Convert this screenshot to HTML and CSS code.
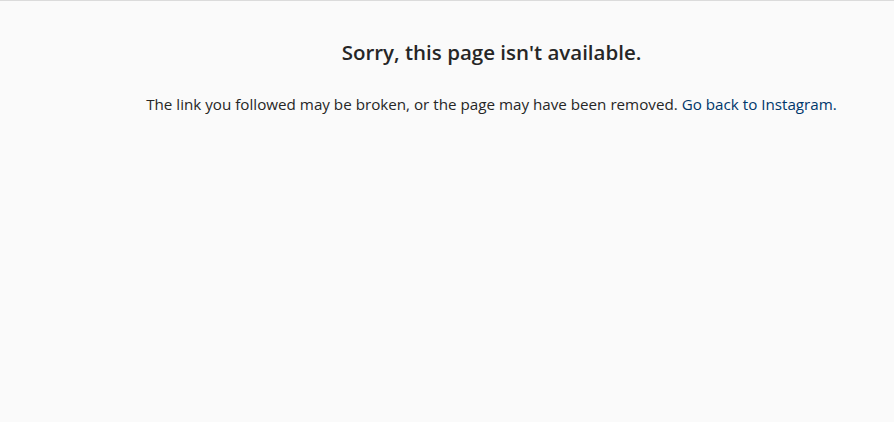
FILE: index.html
```html
<!DOCTYPE html>
<html lang="en">
<head>
  <meta charset="UTF-8" />
  <title>Page Not Found • Instagram</title>
  <link rel="stylesheet" href="styles.css">
</head>
<body>
  <main class="error-page">
    <div class="error-box">
      <h2 class="error-title">Sorry, this page isn't available.</h2>
      <p class="error-text">The link you followed may be broken, or the page may have been removed. <a href="#" class="error-link">Go back to Instagram.</a></p>
    </div>
  </main>
</body>
</html>
```
FILE: styles.css
```css
/* Página base */
html, body {
  margin: 0;
  height: 100%;
}

body {
  background-color: #fafafa;
  border-top: 1px solid #dbdbdb;
  box-sizing: border-box;
  color: #262626;
  font-family: "Open Sans", "Noto Sans", sans-serif;
}

/* Contenedor del mensaje */
.error-page {
  padding: 0 0 0 89px;
}

.error-box {
  padding-top: 38px;
  text-align: center;
}

.error-title {
  margin: 0;
  font-size: 20.5px;
  font-weight: 600;
  line-height: 26px;
}

.error-text {
  margin: 29px 0 0;
  font-size: 15.2px;
  line-height: 20px;
}

.error-link {
  color: #00376b;
  text-decoration: none;
}
```
